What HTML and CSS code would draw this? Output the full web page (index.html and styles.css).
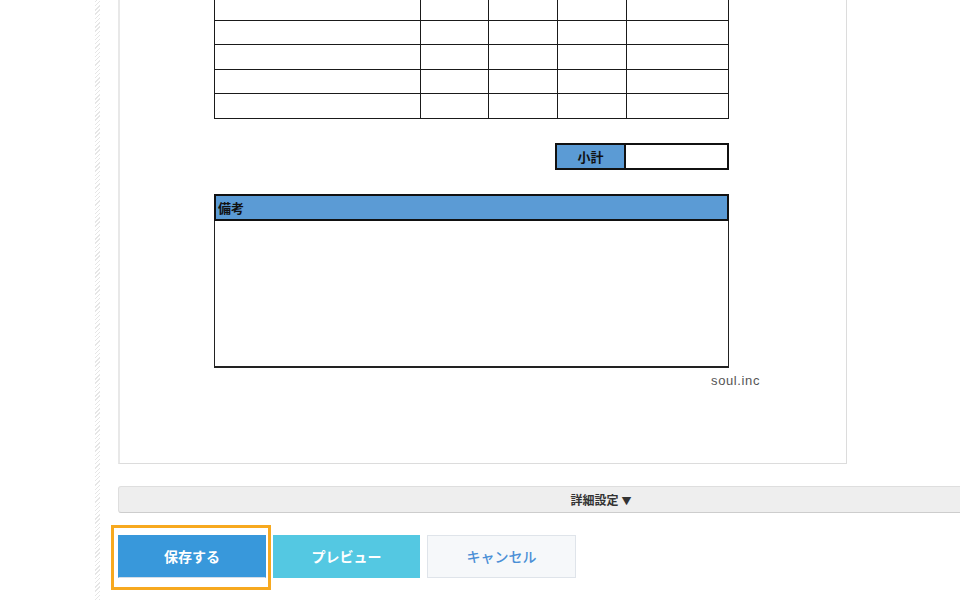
FILE: index.html
```html
<!DOCTYPE html>
<html lang="ja">
<head>
    <meta charset="UTF-8">
    <meta name="viewport" content="width=device-width, initial-scale=1.0">
    <title>請求書の編集</title>
    <link rel="stylesheet" href="styles.css">
</head>
<body>
    <div class="page">
        <div class="rail"></div>
        <main class="editor">
            <div class="preview">
                <div class="sheet">
                    <table class="items">
                        <tr><td></td><td></td><td></td><td></td><td></td></tr>
                        <tr><td></td><td></td><td></td><td></td><td></td></tr>
                        <tr><td></td><td></td><td></td><td></td><td></td></tr>
                        <tr><td></td><td></td><td></td><td></td><td></td></tr>
                        <tr><td></td><td></td><td></td><td></td><td></td></tr>
                    </table>

                    <div class="subtotal">
                        <span class="subtotal-label">小計</span>
                        <span class="subtotal-value"></span>
                    </div>

                    <div class="notes">
                        <div class="notes-head">備考</div>
                        <div class="notes-body"></div>
                    </div>

                    <div class="company">soul.inc</div>
                </div>
            </div>

            <button class="details-toggle">詳細設定<span class="caret">▼</span></button>

            <div class="actions">
                <button class="btn btn-save">保存する</button>
                <button class="btn btn-preview">プレビュー</button>
                <button class="btn btn-cancel">キャンセル</button>
            </div>
        </main>
    </div>
</body>
</html>
```

FILE: styles.css
```css
html, body {
    overflow: hidden;
}
body {
    margin: 0;
    background: #fff;
    font-family: "Noto Sans", "Noto Sans CJK JP", sans-serif;
    color: #333;
}
.page {
    display: flex;
    align-items: flex-start;
    padding-left: 95px;
    width: 1200px;
}
.rail {
    width: 5px;
    height: 600px;
    flex: none;
    background: repeating-linear-gradient(-45deg, #e6e6e6 0 1px, transparent 1px 3px);
}
.editor {
    margin-left: 18px;
    display: flex;
    flex-direction: column;
    align-items: flex-start;
}
.preview {
    width: 729px;
    margin-top: -5px;
    border-left: 2px solid #e8e8e8;
    border-right: 1px solid #dcdcdc;
    border-bottom: 1px solid #dcdcdc;
    padding: 0 0 73px 94px;
    box-sizing: border-box;
}
.sheet {
    width: 546px;
    display: flex;
    flex-direction: column;
}
.items {
    width: 515px;
    border-collapse: collapse;
    table-layout: fixed;
}
.items tr {
    height: 24.5px;
}
.items td {
    border: 1px solid #1a1a1a;
    padding: 0;
}
.items td:nth-child(1) { width: 205px; }
.items td:nth-child(2) { width: 67px; }
.items td:nth-child(3) { width: 68px; }
.items td:nth-child(4) { width: 68px; }

.subtotal {
    align-self: flex-start;
    margin: 24px 0 0 341px;
    display: flex;
    width: 174px;
    height: 27px;
    border: 2px solid #111;
    box-sizing: border-box;
}
.subtotal-label {
    width: 67px;
    background: #5b9bd5;
    border-right: 2px solid #111;
    font-family: "Noto Sans CJK JP", sans-serif;
    font-size: 13px;
    font-weight: bold;
    color: #111;
    display: flex;
    align-items: center;
    justify-content: center;
}
.subtotal-value {
    flex: 1;
    background: #fff;
}

.notes {
    margin-top: 24px;
    width: 515px;
}
.notes-head {
    height: 27px;
    box-sizing: border-box;
    border: 2px solid #111;
    background: #5b9bd5;
    padding-left: 2px;
    font-family: "Noto Sans CJK JP", sans-serif;
    font-size: 13px;
    font-weight: bold;
    color: #111;
    line-height: 23px;
}
.notes-body {
    height: 147px;
    box-sizing: border-box;
    border: 1px solid #222;
    border-top: none;
    border-bottom-width: 2px;
}
.company {
    margin-top: 4px;
    text-align: right;
    font-family: "Liberation Sans", sans-serif;
    font-size: 13px;
    line-height: 18px;
    color: #555;
    letter-spacing: 0.6px;
}

.details-toggle {
    margin-top: 22px;
    width: 966px;
    height: 27px;
    background: #eeeeee;
    border: 1px solid #dedede;
    border-bottom-color: #cdcdcd;
    border-radius: 3px;
    font-family: "Noto Sans CJK JP", sans-serif;
    font-size: 12px;
    font-weight: bold;
    color: #333;
    padding: 0;
    cursor: pointer;
}
.caret {
    margin-left: 3px;
    font-size: 10px;
}

.actions {
    display: flex;
    margin-top: 22px;
}
.btn {
    width: 148px;
    height: 43px;
    border: 1px solid transparent;
    font-family: "Noto Sans CJK JP", sans-serif;
    font-size: 14px;
    font-weight: bold;
    color: #fff;
    padding: 0;
    cursor: pointer;
}
.btn-save {
    position: relative;
    background: #3898db;
    border-color: #3898db;
    border-bottom-color: #d4dde6;
}
.btn-save::after {
    content: "";
    position: absolute;
    top: -11px;
    bottom: -13px;
    left: -8px;
    right: -6px;
    border: 3px solid #f7a91f;
    pointer-events: none;
}
.btn-preview {
    margin-left: 7px;
    width: 147px;
    background: #54c8e2;
    border-color: #54c8e2;
}
.btn-cancel {
    margin-left: 7px;
    width: 149px;
    background: #f6f8fa;
    border-color: #dfe4ea;
    color: #4a8fd6;
    font-weight: 500;
}
```
